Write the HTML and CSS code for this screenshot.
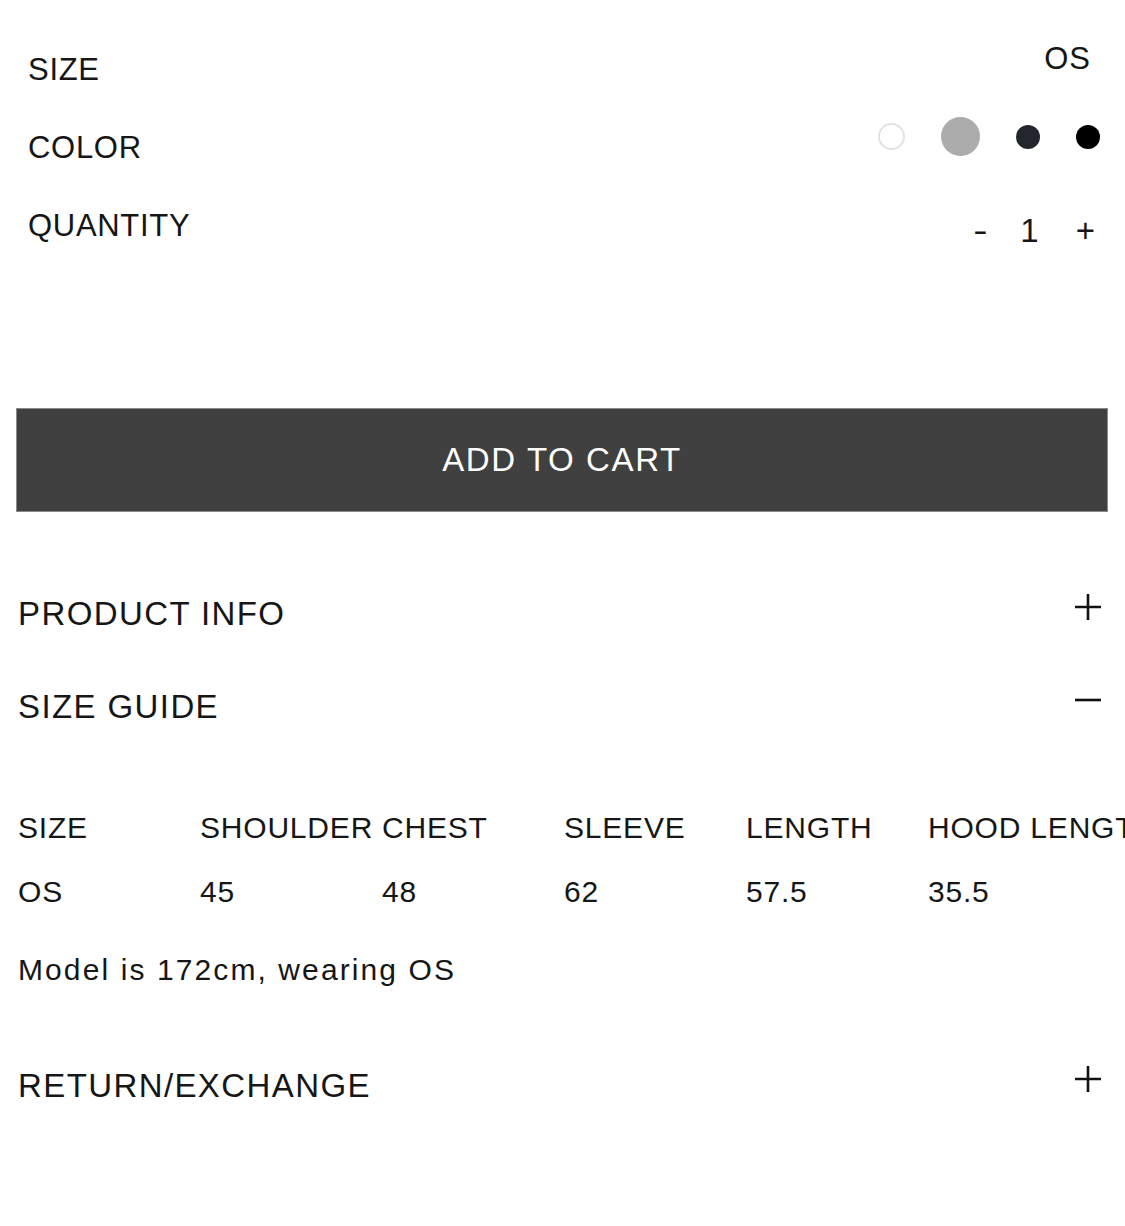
FILE: index.html
```html
<!DOCTYPE html>
<html>
<head>
<meta charset="utf-8">
<link rel="stylesheet" href="styles.css">
</head>
<body>
<div class="page">
  <section class="options">
    <div class="opt-row">
      <span class="opt-label">SIZE</span>
      <span class="opt-size">OS</span>
    </div>
    <div class="opt-row">
      <span class="opt-label">COLOR</span>
      <div class="swatches">
        <span class="dot dot-white"></span>
        <span class="dot dot-gray"></span>
        <span class="dot dot-navy"></span>
        <span class="dot dot-black"></span>
      </div>
    </div>
    <div class="opt-row">
      <span class="opt-label">QUANTITY</span>
      <div class="qty">
        <span class="qty-minus">-</span>
        <span class="qty-num">1</span>
        <span class="qty-plus">+</span>
      </div>
    </div>
  </section>

  <button class="cart-btn">ADD TO CART</button>

  <section class="accordion">
    <div class="acc-head">
      <span class="acc-title">PRODUCT INFO</span>
      <svg class="acc-icon" width="28" height="28" viewBox="0 0 28 28"><path d="M14 1v26M1 14h26" stroke="#111" stroke-width="2.6" fill="none"/></svg>
    </div>
    <div class="acc-head">
      <span class="acc-title">SIZE GUIDE</span>
      <svg class="acc-icon" width="28" height="28" viewBox="0 0 28 28"><path d="M1 14h26" stroke="#111" stroke-width="2.6" fill="none"/></svg>
    </div>
    <div class="acc-body">
      <div class="size-table">
        <span class="th">SIZE</span>
        <span class="th">SHOULDER</span>
        <span class="th">CHEST</span>
        <span class="th">SLEEVE</span>
        <span class="th">LENGTH</span>
        <span class="th">HOOD LENGTH</span>
        <span class="td">OS</span>
        <span class="td">45</span>
        <span class="td">48</span>
        <span class="td">62</span>
        <span class="td">57.5</span>
        <span class="td">35.5</span>
      </div>
      <p class="model-note">Model is 172cm, wearing OS</p>
    </div>
    <div class="acc-head acc-last">
      <span class="acc-title">RETURN/EXCHANGE</span>
      <svg class="acc-icon" width="28" height="28" viewBox="0 0 28 28"><path d="M14 1v26M1 14h26" stroke="#111" stroke-width="2.6" fill="none"/></svg>
    </div>
  </section>
</div>
</body>
</html>
```

FILE: styles.css
```css
html, body {
  margin: 0;
  padding: 0;
  background: #fff;
}
body {
  font-family: "Liberation Sans", Arial, sans-serif;
  color: #161616;
  width: 1125px;
  height: 1226px;
  overflow: hidden;
}
.page {
  width: 1125px;
  overflow: hidden;
}

/* options */
.options {
  padding: 31px 25px 0 28px;
}
.opt-row {
  display: flex;
  justify-content: space-between;
  align-items: center;
  height: 78px;
}
.opt-label {
  font-size: 31px;
  line-height: 32px;
  letter-spacing: 0.7px;
}
.opt-size {
  align-self: flex-start;
  margin-top: 12px;
  margin-right: 9px;
  font-size: 31px;
  line-height: 32px;
  letter-spacing: 1px;
}
.swatches {
  display: flex;
  align-items: center;
  gap: 36px;
  margin-bottom: 23px;
}
.dot {
  display: block;
  border-radius: 50%;
  box-sizing: border-box;
}
.dot-white {
  width: 27px;
  height: 27px;
  border: 2px solid #e2e2e2;
  background: #fff;
}
.dot-gray {
  width: 39px;
  height: 39px;
  background: #acacac;
}
.dot-navy {
  width: 24px;
  height: 24px;
  background: #23252f;
}
.dot-black {
  width: 24px;
  height: 24px;
  background: #000;
}
.qty {
  display: flex;
  align-items: center;
  margin-top: 9px;
  margin-right: 5px;
  font-size: 33px;
  line-height: 36px;
}
.qty-minus {
  margin-right: 34px;
  transform: scaleX(1.3);
}
.qty-num {
  margin-right: 37px;
}

/* button */
.cart-btn {
  display: block;
  margin: 143px 0 0 16px;
  width: 1092px;
  height: 104px;
  background: #404040;
  border: 1px solid #8a8a8a;
  color: #fff;
  font-family: "Liberation Sans", Arial, sans-serif;
  font-size: 33px;
  letter-spacing: 1.6px;
  padding: 0;
  cursor: pointer;
}

/* accordion */
.accordion {
  padding: 55px 23px 0 18px;
}
.acc-head {
  display: flex;
  justify-content: space-between;
  align-items: center;
  height: 93px;
}
.acc-title {
  font-size: 33px;
  line-height: 36px;
  letter-spacing: 1.4px;
}
.acc-icon {
  display: block;
  margin-bottom: 14px;
}
.acc-body {
  padding-top: 60px;
}
.size-table {
  display: grid;
  grid-template-columns: repeat(6, 182px);
  grid-auto-rows: 64px;
  width: 1092px;
}
.th, .td {
  font-size: 30px;
  line-height: 30px;
  letter-spacing: 0.8px;
  white-space: nowrap;
}
.model-note {
  margin: 14px 0 0;
  font-size: 30px;
  line-height: 30px;
  letter-spacing: 2.1px;
}
.acc-last {
  margin-top: 54px;
}
```
